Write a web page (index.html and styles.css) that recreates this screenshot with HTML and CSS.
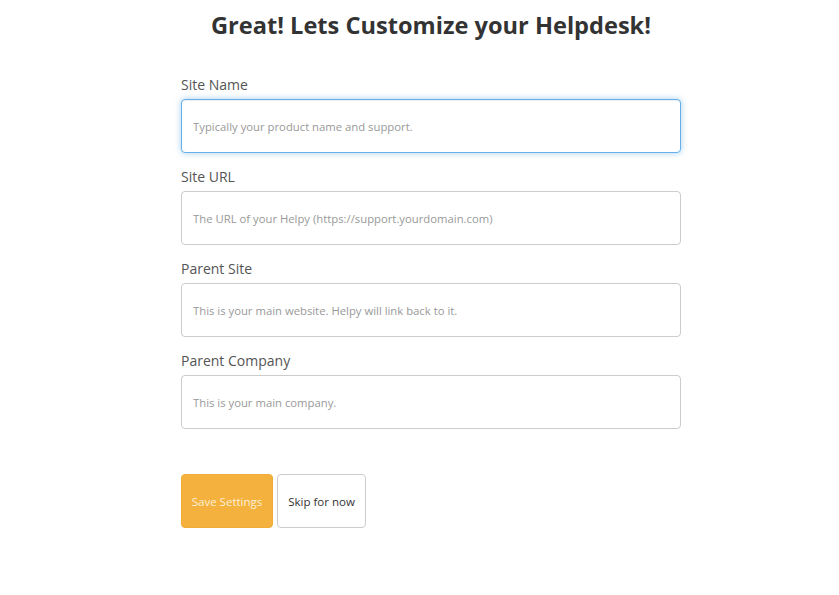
FILE: index.html
```html
<!DOCTYPE html>
<html>
<head>
<meta charset="utf-8">
<link rel="stylesheet" href="styles.css">
</head>
<body>
<div class="wrap">
  <h1 class="title">Great! Lets Customize your Helpdesk!</h1>
  <form class="form">
    <div class="group">
      <label class="label">Site Name</label>
      <input class="input focus" type="text" placeholder="Typically your product name and support.">
    </div>
    <div class="group">
      <label class="label">Site URL</label>
      <input class="input" type="text" placeholder="The URL of your Helpy (https://support.yourdomain.com)">
    </div>
    <div class="group">
      <label class="label">Parent Site</label>
      <input class="input" type="text" placeholder="This is your main website. Helpy will link back to it.">
    </div>
    <div class="group">
      <label class="label">Parent Company</label>
      <input class="input" type="text" placeholder="This is your main company.">
    </div>
    <div class="actions">
      <button type="button" class="btn btn-save">Save Settings</button>
      <button type="button" class="btn btn-skip">Skip for now</button>
    </div>
  </form>
</div>
</body>
</html>
```
FILE: styles.css
```css
html, body {
  margin: 0;
  padding: 0;
  background: #fff;
}
body {
  font-family: "Open Sans", "Noto Sans", sans-serif;
  color: #555;
}
.wrap {
  width: 500px;
  margin-left: 181px;
  padding-top: 8px;
}
.title {
  margin: 0;
  text-align: center;
  font-size: 23.6px;
  font-weight: 700;
  color: #333;
  line-height: 34px;
  white-space: nowrap;
}
.form {
  margin-top: 33px;
  display: flex;
  flex-direction: column;
}
.group {
  display: flex;
  flex-direction: column;
  margin-bottom: 14px;
}
.label {
  font-size: 14px;
  line-height: 20px;
  color: #555;
  margin-bottom: 4px;
}
.input {
  box-sizing: border-box;
  width: 500px;
  height: 54px;
  border: 1px solid #ccc;
  border-radius: 4px;
  padding: 0 11px;
  font-family: inherit;
  font-size: 11.3px;
  color: #555;
  outline: none;
}
.input::placeholder {
  color: #999;
}
.input.focus {
  border-color: #66afe9;
  box-shadow: inset 0 1px 1px rgba(0,0,0,.075), 0 0 6px rgba(102,175,233,.6);
}
.actions {
  display: flex;
  gap: 4px;
  margin-top: 31px;
}
.btn {
  box-sizing: border-box;
  height: 54px;
  border-radius: 4px;
  font-family: inherit;
  font-size: 11.5px;
  padding: 0;
  white-space: nowrap;
  text-align: center;
}
.btn-save {
  width: 92px;
  background: #f4b13d;
  border: 1px solid #f0ac35;
  color: #fdf0d8;
}
.btn-skip {
  width: 89px;
  background: #fff;
  border: 1px solid #ccc;
  color: #333;
}
```
